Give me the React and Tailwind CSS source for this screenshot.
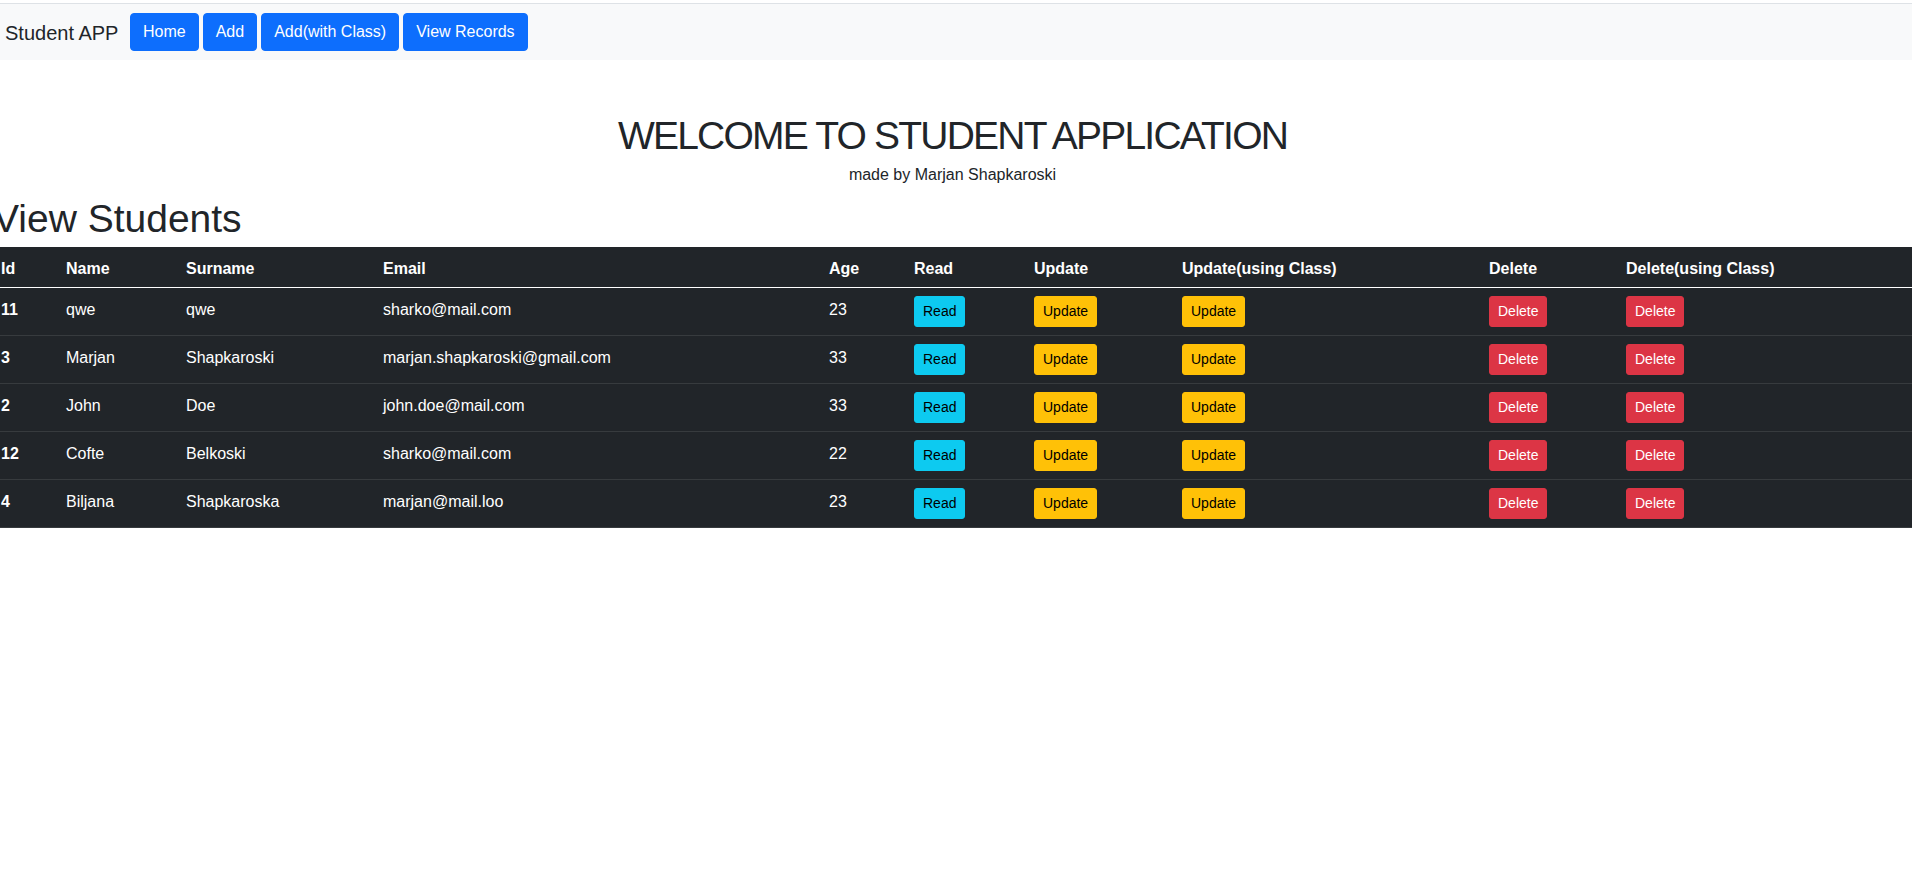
import React from "react";

const students = [
  { id: 11, name: "qwe", surname: "qwe", email: "sharko@mail.com", age: 23 },
  { id: 3, name: "Marjan", surname: "Shapkaroski", email: "marjan.shapkaroski@gmail.com", age: 33 },
  { id: 2, name: "John", surname: "Doe", email: "john.doe@mail.com", age: 33 },
  { id: 12, name: "Cofte", surname: "Belkoski", email: "sharko@mail.com", age: 22 },
  { id: 4, name: "Biljana", surname: "Shapkaroska", email: "marjan@mail.loo", age: 23 },
];

// ==============================
// 🔹 NAVBAR
// ==============================
const NavBtn = ({ children }) => (
  <button className="h-[38px] px-3 rounded-[4px] bg-[#0d6efd] border border-[#0d6efd] text-white text-base leading-6 whitespace-nowrap">
    {children}
  </button>
);

const Navbar = () => (
  <nav className="bg-[#f8f9fa] border-t border-[#dee2e6]">
    <div className="flex items-center pl-3 pt-[9px] pb-[9px]">
      <span className="text-[20px] leading-[30px] pt-[2px] mr-4 w-[109px] whitespace-nowrap text-[#212529]">
        Student APP
      </span>
      <div className="flex gap-1">
        <NavBtn>Home</NavBtn>
        <NavBtn>Add</NavBtn>
        <NavBtn>Add(with Class)</NavBtn>
        <NavBtn>View Records</NavBtn>
      </div>
    </div>
  </nav>
);

// ==============================
// 🔹 SMALL BUTTON
// ==============================
const SmallBtn = ({ kind, children }) => {
  let color = "bg-[#0dcaf0] border-[#0dcaf0] text-black";
  if (kind === "warning") color = "bg-[#ffc107] border-[#ffc107] text-black";
  if (kind === "danger") color = "bg-[#dc3545] border-[#dc3545] text-white";

  return (
    <button className={`h-[31px] px-2 border rounded-[3px] text-sm leading-[21px] ${color}`}>
      {children}
    </button>
  );
};

const Th = ({ w, children }) => (
  <th className={`${w} px-2 pt-[10px] pb-[6px] text-left font-bold leading-6`}>{children}</th>
);

// text cells sit a bit lower than the buttons, like the original font
const Td = ({ children, bold }) => (
  <td className={`px-2 pt-[10px] pb-[6px] align-top leading-6 ${bold ? "font-bold" : ""}`}>{children}</td>
);

const BtnTd = ({ children }) => <td className="px-2 py-2 align-top">{children}</td>;

export default function App() {
  return (
    <div className="min-h-screen bg-white overflow-hidden font-['Liberation_Sans',Arial,sans-serif] text-[#212529]">
      <div className="w-[1919px] -ml-[7px] pt-[3px]">
        <Navbar />

        {/* WELCOME */}
        <h1 className="mt-[52px] text-center text-[39px] leading-[47px] tracking-[-1.8px] font-normal">
          WELCOME TO STUDENT APPLICATION
        </h1>
        <p className="mt-[4px] text-center text-base leading-6">made by Marjan Shapkaroski</p>

        {/* VIEW STUDENTS */}
        <h2 className="mt-[9px] text-[39px] leading-[46px] font-normal whitespace-nowrap">View Students</h2>

        <table className="mt-[5px] w-[1919px] table-fixed border-collapse bg-[#212529] text-white text-base">
          <thead>
            <tr className="border-b border-white">
              <Th w="w-[65px]">Id</Th>
              <Th w="w-[120px]">Name</Th>
              <Th w="w-[197px]">Surname</Th>
              <Th w="w-[446px]">Email</Th>
              <Th w="w-[85px]">Age</Th>
              <Th w="w-[120px]">Read</Th>
              <Th w="w-[148px]">Update</Th>
              <Th w="w-[307px]">Update(using Class)</Th>
              <Th w="w-[137px]">Delete</Th>
              <Th w="w-auto">Delete(using Class)</Th>
            </tr>
          </thead>
          <tbody>
            {students.map((s) => (
              <tr key={s.id} className="border-b border-[#373b3e]">
                <Td bold>{s.id}</Td>
                <Td>{s.name}</Td>
                <Td>{s.surname}</Td>
                <Td>{s.email}</Td>
                <Td>{s.age}</Td>
                <BtnTd><SmallBtn kind="info">Read</SmallBtn></BtnTd>
                <BtnTd><SmallBtn kind="warning">Update</SmallBtn></BtnTd>
                <BtnTd><SmallBtn kind="warning">Update</SmallBtn></BtnTd>
                <BtnTd><SmallBtn kind="danger">Delete</SmallBtn></BtnTd>
                <BtnTd><SmallBtn kind="danger">Delete</SmallBtn></BtnTd>
              </tr>
            ))}
          </tbody>
        </table>
      </div>
    </div>
  );
}
